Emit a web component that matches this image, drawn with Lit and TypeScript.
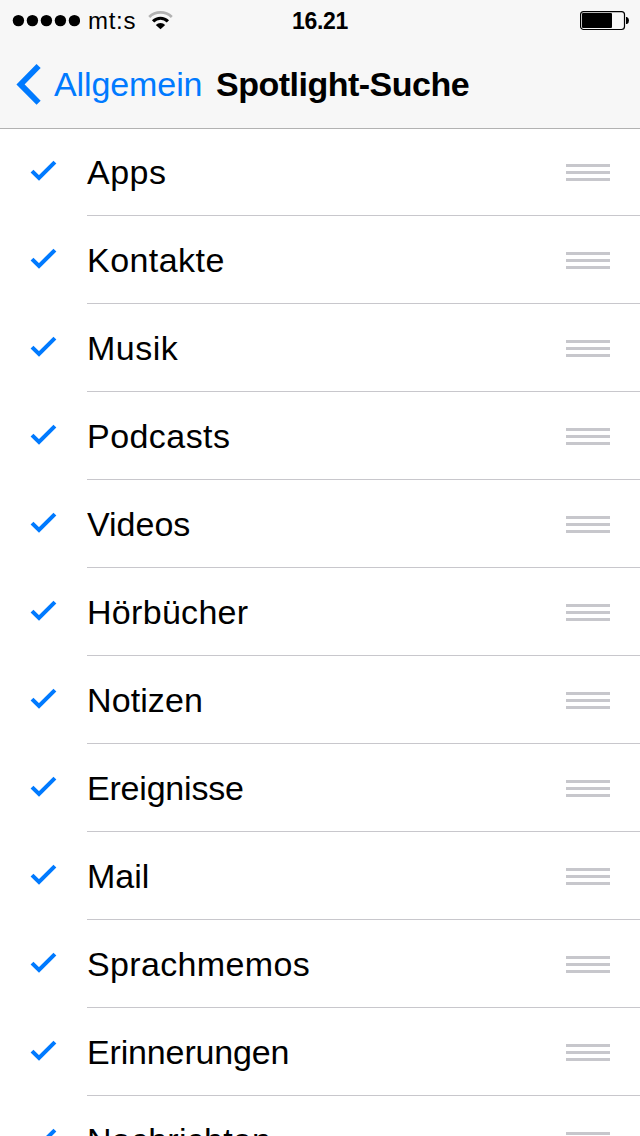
import { LitElement, html, css, svg } from "lit";
import { customElement, property } from "lit/decorators.js";
import { styleMap } from "lit/directives/style-map.js";

interface Category {
  label: string;
  tracking: number;
}

const CATEGORIES: Category[] = [
  { label: "Apps", tracking: 0.5 },
  { label: "Kontakte", tracking: 0.45 },
  { label: "Musik", tracking: 0.5 },
  { label: "Podcasts", tracking: 0.45 },
  { label: "Videos", tracking: 0 },
  { label: "Hörbücher", tracking: 0.3 },
  { label: "Notizen", tracking: 0.1 },
  { label: "Ereignisse", tracking: -0.2 },
  { label: "Mail", tracking: 0 },
  { label: "Sprachmemos", tracking: 0.35 },
  { label: "Erinnerungen", tracking: -0.15 },
  { label: "Nachrichten", tracking: 0.25 },
];

@customElement("status-bar")
class StatusBar extends LitElement {
  static styles = css`
    :host {
      display: grid;
      grid-template-columns: 1fr auto 1fr;
      height: 40px;
      line-height: 41px;
      font-size: 24px;
    }
    svg { display: block; }
    .left { display: flex; padding-left: 12px; }
    .carrier { margin-left: 8px; letter-spacing: 0.7px; width: 48px; white-space: nowrap; }
    .wifi { margin-left: 12px; }
    .time { font-size: 23px; font-weight: 700; line-height: 43px; letter-spacing: -0.3px; }
    .right { display: flex; justify-content: flex-end; padding-right: 10px; }
  `;

  render() {
    return html`
      <div class="left">
        <svg width="68" height="40" viewBox="0 0 68 40">
          ${[0, 1, 2, 3, 4].map((i) => svg`<circle cx=${6.4 + i * 14} cy="20.6" r="5.7" />`)}
        </svg>
        <span class="carrier">mt:s</span>
        <svg class="wifi" width="25" height="40" viewBox="0 0 25 40">
          <path d="M1.2 16.9A16.2 16.2 0 0 1 23.8 16.9" fill="none" stroke="#b2b2b2" stroke-width="2.8" />
          <path d="M5.1 21.3A10.5 10.5 0 0 1 19.9 21.3" fill="none" stroke="#000" stroke-width="3.2" />
          <path d="M7.8 24.9A6.5 6.5 0 0 1 17.2 24.9L12.5 29.3Z" />
        </svg>
      </div>
      <div class="time">16.21</div>
      <div class="right">
        <svg width="50" height="40" viewBox="0 0 50 40">
          <rect x="0.6" y="11.6" width="43.9" height="17.9" rx="3" fill="none" stroke="#000" stroke-width="1.2" />
          <rect x="2" y="13" width="30" height="15" rx="1" />
          <path d="M46 17h1Q49 18 49 20.5T47 24h-1Z" />
        </svg>
      </div>
    `;
  }
}

@customElement("nav-bar")
class NavBar extends LitElement {
  static styles = css`
    :host {
      display: flex;
      height: 88px;
      line-height: 88px;
      font-size: 34px;
      padding-left: 16px;
      white-space: nowrap;
    }
    .chevron { display: block; flex: none; }
    .back { color: #007aff; margin-left: 12px; width: 162px; letter-spacing: -0.1px; }
    .title { font-weight: 700; letter-spacing: -0.5px; }
  `;

  render() {
    return html`
      <svg class="chevron" width="26" height="88" viewBox="0 0 26 88">
        <path d="M22.6 26L4.5 44.4L22.6 62.7" fill="none" stroke="#007aff" stroke-width="5.8" />
      </svg>
      <span class="back">Allgemein</span>
      <span class="title">Spotlight-Suche</span>
    `;
  }
}

@customElement("category-row")
class CategoryRow extends LitElement {
  static styles = css`
    :host { display: flex; height: 88px; flex: none; }
    svg { display: block; flex: none; }
    .body {
      flex: 1;
      box-sizing: border-box;
      display: flex;
      justify-content: space-between;
      border-bottom: 1px solid #c8c7cc;
      padding-right: 30px;
      font-size: 34px;
      line-height: 88px;
    }
  `;

  @property({ attribute: false }) category!: Category;

  render() {
    const { label, tracking } = this.category;
    return html`
      <svg width="87" height="88" viewBox="0 0 87 88">
        <path d="M32 43.1L39 49.9L54.9 34.1" fill="none" stroke="#007aff" stroke-width="4.1" />
      </svg>
      <div class="body">
        <span style=${styleMap({ letterSpacing: `${tracking}px` })}>${label}</span>
        <svg width="44" height="87" viewBox="0 0 44 87">
          <path d="M0 36h44v3H0zM0 43h44v3H0zM0 50h44v3H0z" fill="#c7c7cc" />
        </svg>
      </div>
    `;
  }
}

@customElement("app-root")
class AppRoot extends LitElement {
  static styles = css`
    :host {
      display: flex;
      flex-direction: column;
      width: 640px;
      height: 1136px;
      overflow: hidden;
      background: #fff;
      color: #000;
      font-family: "Liberation Sans", Arial, sans-serif;
    }
    .header { flex: none; background: #f7f7f7; box-shadow: 0 1px 0 #b2b2b2; position: relative; }
    .list { flex: 1; min-height: 0; overflow: hidden; display: flex; flex-direction: column; }
  `;

  render() {
    return html`
      <header class="header">
        <status-bar></status-bar>
        <nav-bar></nav-bar>
      </header>
      <main class="list">
        ${CATEGORIES.map((c) => html`<category-row .category=${c}></category-row>`)}
      </main>
    `;
  }
}
